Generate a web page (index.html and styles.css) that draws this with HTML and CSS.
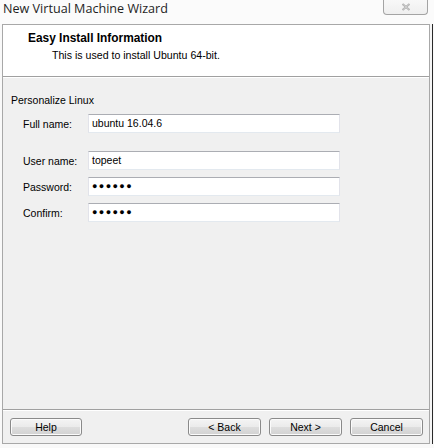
FILE: index.html
```html
<!DOCTYPE html>
<html>
<head>
<meta charset="utf-8">
<link rel="stylesheet" href="styles.css">
</head>
<body>
<div class="screen">
  <div class="titlebar">
    <div class="title">New Virtual Machine Wizard</div>
    <div class="close">
      <svg width="10" height="8" viewBox="0 0 10 8"><path d="M1.5 1 L8.5 7 M8.5 1 L1.5 7" stroke="#a8a8a8" stroke-width="1.8" fill="none"/><path d="M1.5 1 L8.5 7 M8.5 1 L1.5 7" stroke="#f2f2f2" stroke-width="0.5" fill="none"/></svg>
    </div>
  </div>
  <div class="dialog">
    <div class="header">
      <div class="h-title">Easy Install Information</div>
      <div class="h-sub">This is used to install Ubuntu 64-bit.</div>
    </div>
    <div class="content">
      <div class="group-label">Personalize Linux</div>
      <div class="row row-first">
        <span class="label">Full name:</span>
        <div class="field">ubuntu 16.04.6</div>
      </div>
      <div class="row row-user">
        <span class="label">User name:</span>
        <div class="field">topeet</div>
      </div>
      <div class="row">
        <span class="label">Password:</span>
        <div class="field pw">●●●●●●</div>
      </div>
      <div class="row">
        <span class="label">Confirm:</span>
        <div class="field pw">●●●●●●</div>
      </div>
    </div>
    <div class="footer">
      <button class="btn btn-help">Help</button>
      <div class="spacer"></div>
      <button class="btn">&lt; Back</button>
      <button class="btn">Next &gt;</button>
      <button class="btn">Cancel</button>
    </div>
  </div>
</div>
</body>
</html>
```
FILE: styles.css
```css
html, body {
  margin: 0;
  padding: 0;
}
body {
  width: 434px;
  height: 448px;
  overflow: hidden;
  background: #f9f9f9;
  font-family: "Liberation Sans", Arial, sans-serif;
  color: #000;
}
.screen {
  width: 434px;
  height: 448px;
  display: flex;
  flex-direction: column;
}
.titlebar {
  height: 24px;
  display: flex;
  justify-content: space-between;
  align-items: flex-start;
  background: #fbfbfb;
}
.title {
  font-family: "Open Sans", "Liberation Sans", sans-serif;
  font-size: 12.6px;
  color: #1e1e1e;
  padding-left: 3px;
  line-height: 18px;
}
.close {
  width: 45px;
  height: 15px;
  margin-right: 6px;
  box-sizing: border-box;
  border: 1px solid #a4a4a4;
  border-top: none;
  border-radius: 0 0 4px 4px;
  background: linear-gradient(#f8f8f8, #efefef);
  display: flex;
  align-items: center;
  justify-content: center;
}
.dialog {
  margin-left: 2px;
  width: 428px;
  height: 420px;
  box-sizing: border-box;
  border: 1px solid #a8a8a8;
  background: #f0f0f0;
  display: flex;
  flex-direction: column;
  box-shadow: 2px 0 0 #f6f6f6, 3px 0 0 #2a2a2a;
}
.header {
  height: 52px;
  background: #fff;
  border-bottom: 1px solid #a0a0a0;
  box-shadow: 0 1px 0 #fff;
  padding: 7px 0 0 25px;
  box-sizing: border-box;
  flex: none;
}
.h-title {
  font-weight: bold;
  font-size: 11.9px;
  line-height: 13px;
}
.h-sub {
  font-size: 10.6px;
  line-height: 13px;
  margin-top: 4px;
  padding-left: 24px;
}
.content {
  flex: 1;
  padding: 17px 0 0 8px;
  font-size: 10.5px;
}
.group-label {
  line-height: 13px;
}
.row {
  display: flex;
  align-items: center;
  margin-top: 7px;
  padding-left: 12px;
}
.row-first {
  margin-top: 7px;
}
.row-user {
  margin-top: 18px;
}
.label {
  flex: none;
  width: 65px;
}
.field {
  width: 252px;
  height: 19px;
  box-sizing: border-box;
  background: #fff;
  border: 1px solid #e2e3ea;
  border-top-color: #abadb3;
  border-bottom-color: #e3e9ef;
  padding-left: 3px;
  line-height: 17px;
  font-size: 10.5px;
}
.pw {
  font-size: 9px;
  letter-spacing: 1.4px;
  padding-left: 3px;
}
.footer {
  flex: none;
  border-top: 1px solid #a0a0a0;
  box-shadow: inset 0 1px 0 #fff;
  display: flex;
  gap: 8px;
  padding: 8px 6px 7px 7px;
}
.spacer {
  flex: 1;
}
.btn {
  width: 73px;
  height: 18px;
  box-sizing: border-box;
  border: 1px solid #8a8a8a;
  border-radius: 3px;
  background: linear-gradient(#f4f4f4 0%, #ebebeb 48%, #dddddd 52%, #d2d2d2 100%);
  box-shadow: inset 0 0 0 1px #fbfbfb;
  font-family: "Liberation Sans", Arial, sans-serif;
  font-size: 10.5px;
  color: #000;
  padding: 0;
  line-height: 16px;
}
.btn-help {
  width: 72px;
}
```
